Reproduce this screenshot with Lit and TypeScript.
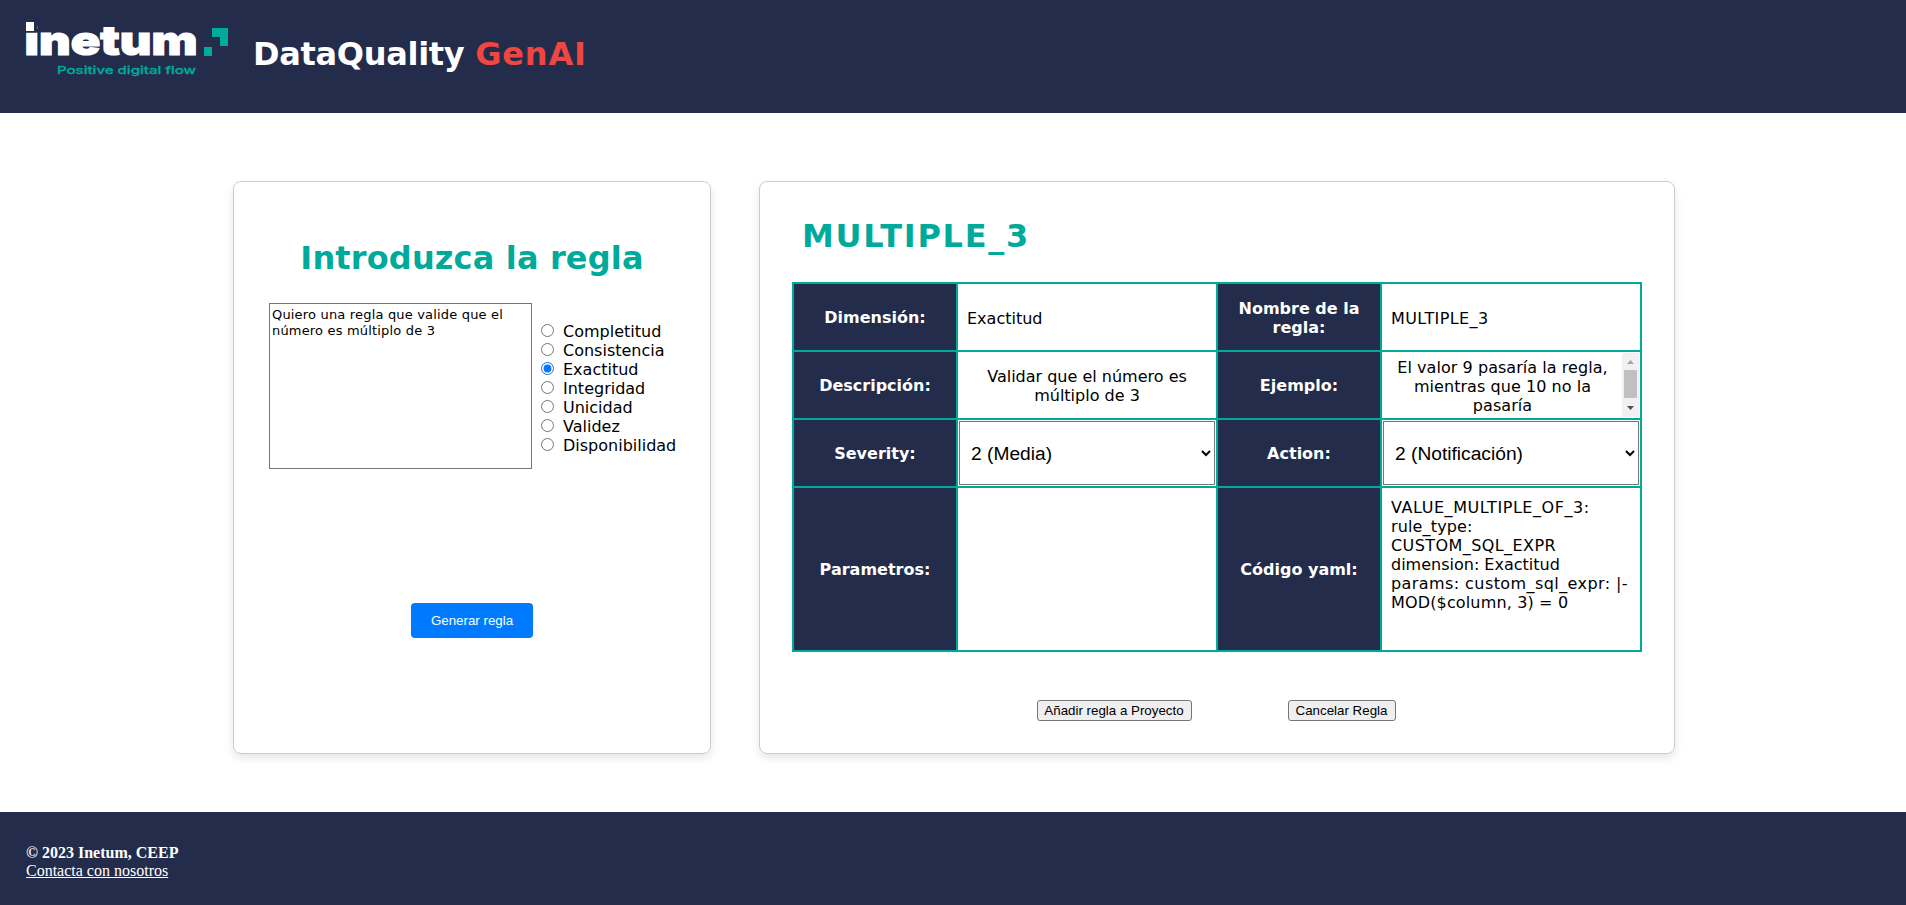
import { LitElement, html, css, svg } from "lit";
import { customElement } from "lit/decorators.js";

const DIMENSIONS = ["Completitud", "Consistencia", "Exactitud", "Integridad", "Unicidad", "Validez", "Disponibilidad"];

@customElement("inetum-logo")
class InetumLogo extends LitElement {
  static styles = css`
    :host { display: block; width: 205px; height: 56px; }
    .logo { display: block; overflow: visible; }
    .word { font: 900 41px/1 Inter, sans-serif; fill: #fff; stroke: #fff; stroke-width: 1.2; }
    .tag { font: 500 11px/1 Inter, sans-serif; fill: #00aa9b; stroke: #00aa9b; stroke-width: 0.3; }
    .mark { fill: #00aa9b; }
    .gap { fill: #232c4b; }
    .dot { fill: #fff; }
  `;
  render() {
    return html`<svg class="logo" width="205" height="56" viewBox="0 0 205 56">
      <text class="word" x="-1.5" y="33.4" textLength="173" lengthAdjust="spacingAndGlyphs">inetum</text>
      ${svg`<path class="gap" d="M-3-3h14v13.6h-14z"/><path class="dot" d="M0 0h8v9h-8z"/>`}
      <text class="tag" x="31" y="51.5" textLength="139" lengthAdjust="spacingAndGlyphs">Positive digital flow</text>
      ${svg`<path class="mark" d="M186 6h16v18h-8v-9h-8zM178 25h8v9h-8z"/>`}
    </svg>`;
  }
}

@customElement("app-root")
class AppRoot extends LitElement {
  static styles = css`
    :host { display: flex; flex-direction: column; height: 905px; background: #fff; color: #000; font: 16px/19px Verdana, "DejaVu Sans", sans-serif; }
    * { box-sizing: border-box; }
    .header { height: 113px; background: #232c4b; display: flex; padding: 22px 0 0 26px; flex: none; }
    .title { margin: 13px 0 0 22px; font-size: 32px; line-height: 39px; color: #fff; white-space: nowrap; letter-spacing: -0.3px; }
    .accent { color: #f04641; letter-spacing: 0.8px; }
    .main { flex: 1; display: flex; gap: 48px; padding: 68px 0 58px 233px; }
    .card { border: 1px solid #ccc; border-radius: 8px; box-shadow: 0 4px 8px rgba(0,0,0,.1); display: flex; flex-direction: column; }
    .entry { width: 478px; padding: 57px 35px 0; align-items: center; }
    .detail { width: 916px; padding: 35px 32px 0; }
    .heading { margin: 0; font-size: 32px; line-height: 39px; color: #00aa9b; white-space: nowrap; letter-spacing: 0.15px; }
    .form { display: flex; width: 406px; margin-top: 25px; }
    .prompt { width: 263px; flex: none; height: 166px; border: 1px solid #767676; padding: 3px 2px 2px; margin: 0; resize: none; font: 13px/16px Verdana, "DejaVu Sans", sans-serif; letter-spacing: 0.18px; overflow: hidden; background: #fff; color: #000; }
    .radios { padding: 18px 0 0 9px; }
    .option { display: flex; height: 19px; align-items: center; white-space: nowrap; }
    .option span { padding-top: 1px; }
    .radio { width: 13px; height: 13px; margin: 0 9px 0 0; accent-color: #0075ff; }
    .generate { margin-top: 134px; width: 122px; height: 35px; background: #007bff; color: #fff; border: 0; border-radius: 4px; font: 13.333px "Liberation Sans", Arial, sans-serif; padding: 0; }
    .name { margin-left: 10px; letter-spacing: 1.75px; }
    .grid { margin-top: 26px; width: 850px; display: grid; grid-template-columns: 162px 258px 162px 258px; grid-template-rows: 66px 66px 66px 162px; gap: 2px; padding: 2px; background: #00aa9b; }
    .key { background: #232c4b; color: #fff; font-weight: 700; display: flex; align-items: center; justify-content: center; text-align: center; padding: 1px 10px 0; }
    .value { background: #fff; display: flex; align-items: center; padding: 1px; }
    .plain { padding: 2px 0 0 9px; }
    .upper { letter-spacing: 0.4px; }
    .centered { justify-content: center; text-align: center; }
    .text { padding-top: 1px; }
    .code { display: block; padding: 10px 0 0 9px; white-space: nowrap; }
    .code1 { letter-spacing: 0.56px; }
    .code2 { letter-spacing: 0.15px; }
    .code3 { letter-spacing: 0.42px; }
    .select { width: 256px; height: 64px; border: 1px solid #767676; border-radius: 0; background: #fff; font: 19.2px "Liberation Sans", Arial, sans-serif; color: #000; padding: 0 7px; }
    .example { flex: 1; white-space: nowrap; padding-top: 2px; letter-spacing: 0.05px; }
    .scroll { width: 17px; height: 64px; background: #f1f1f1; }
    .scroll-art { display: block; }
    .actions { display: flex; justify-content: center; gap: 96px; margin: 48px 2px 0 0; }
    .btn { height: 21px; border: 1px solid #767676; border-radius: 3px; background: #efefef; color: #000; font: 13.333px "Liberation Sans", Arial, sans-serif; padding: 0; }
    .add { width: 155px; }
    .cancel { width: 108px; }
    .footer { height: 93px; flex: none; background: #232c4b; color: #fff; padding: 32px 26px 0; font: 16px/18px "Liberation Serif", "Times New Roman", serif; }
    .link { color: #fff; text-decoration: underline; }
  `;
  render() {
    return html`
      <header class="header"><inetum-logo></inetum-logo><h1 class="title">DataQuality <span class="accent">GenAI</span></h1></header>
      <main class="main">
        <section class="card entry">
          <h1 class="heading">Introduzca la regla</h1>
          <div class="form">
            <textarea class="prompt" .value=${"Quiero una regla que valide que el número es múltiplo de 3"}></textarea>
            <div class="radios">${DIMENSIONS.map((d) => html`<label class="option"><input class="radio" type="radio" name="dim" ?checked=${d === "Exactitud"} /><span>${d}</span></label>`)}</div>
          </div>
          <button class="generate">Generar regla</button>
        </section>
        <section class="card detail">
          <h1 class="heading name">MULTIPLE_3</h1>
          <div class="grid">
            <div class="key">Dimensión:</div><div class="value plain">Exactitud</div>
            <div class="key">Nombre de la<br />regla:</div><div class="value plain upper">MULTIPLE_3</div>
            <div class="key">Descripción:</div><div class="value centered"><span class="text">Validar que el número es<br />múltiplo de 3</span></div>
            <div class="key">Ejemplo:</div>
            <div class="value centered"><span class="example">El valor 9 pasaría la regla,<br />mientras que 10 no la<br />pasaría</span>
              <div class="scroll"><svg class="scroll-art" width="17" height="64"><path d="M5 11l3.5-4 3.5 4z" fill="#a3a3a3"/><rect x="2" y="17" width="13" height="28" fill="#c1c1c1"/><path d="M5 53l3.5 4 3.5-4z" fill="#505050"/></svg></div></div>
            <div class="key">Severity:</div><div class="value"><select class="select"><option>2 (Media)</option></select></div>
            <div class="key">Action:</div><div class="value"><select class="select"><option>2 (Notificación)</option></select></div>
            <div class="key">Parametros:</div><div class="value"></div>
            <div class="key">Código yaml:</div>
            <div class="value code"><span class="code1">VALUE_MULTIPLE_OF_3:</span><br /><span class="code2">rule_type:</span><br /><span class="code3">CUSTOM_SQL_EXPR</span><br />dimension: Exactitud<br /><span class="code3">params: custom_sql_expr: |-</span><br /><span class="code2">MOD($column, 3) = 0</span></div>
          </div>
          <div class="actions"><button class="btn add">Añadir regla a Proyecto</button><button class="btn cancel">Cancelar Regla</button></div>
        </section>
      </main>
      <footer class="footer"><b>© 2023 Inetum, CEEP</b><br /><a class="link">Contacta con nosotros</a></footer>`;
  }
}
